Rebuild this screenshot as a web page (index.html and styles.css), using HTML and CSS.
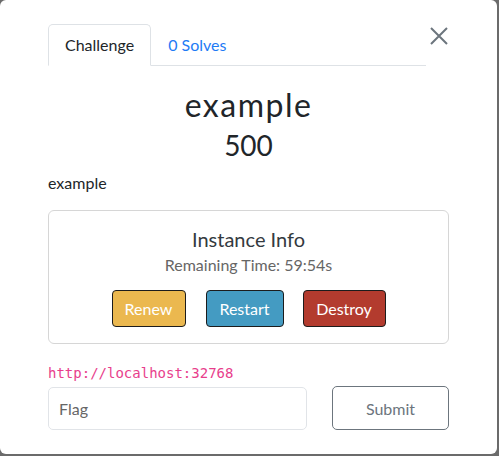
FILE: index.html
```html
<!DOCTYPE html>
<html lang="en">
<head>
  <meta charset="UTF-8">
  <meta name="viewport" content="width=device-width, initial-scale=1.0">
  <title>Challenge</title>
  <link rel="stylesheet" href="styles.css">
</head>
<body>
  <div class="modal">
    <div class="modal-head">
      <ul class="tabs">
        <li class="tab active">Challenge</li>
        <li class="tab link">0 Solves</li>
      </ul>
      <button class="close" aria-label="Close">
        <svg width="18" height="18" viewBox="0 0 18 18">
          <path d="M1 1 L17 17 M17 1 L1 17" stroke="#6c757d" stroke-width="2" fill="none"/>
        </svg>
      </button>
    </div>

    <h2 class="title">example</h2>
    <h3 class="value">500</h3>

    <p class="desc">example</p>

    <div class="instance">
      <h4>Instance Info</h4>
      <p class="time">Remaining Time: 59:54s</p>
      <div class="actions">
        <button class="btn renew">Renew</button>
        <button class="btn restart">Restart</button>
        <button class="btn destroy">Destroy</button>
      </div>
    </div>

    <code class="url">http://localhost:32768</code>

    <form class="flag-form">
      <input type="text" placeholder="Flag">
      <button type="submit">Submit</button>
    </form>
  </div>
</body>
</html>
```

FILE: styles.css
```css
body {
  margin: 0;
  padding: 0;
  background: #6b6b6b;
  font-family: Lato, "Open Sans", sans-serif;
  color: #212529;
}

.modal {
  width: 497px;
  height: 454px;
  box-sizing: border-box;
  background: #fff;
  border-radius: 6px;
  padding: 24px 48px 0 48px;
}

.modal-head {
  display: flex;
  align-items: flex-start;
}

.tabs {
  flex: 1;
  display: flex;
  list-style: none;
  margin: 0;
  padding: 0;
  border-bottom: 1px solid #dee2e6;
}

.tab {
  padding: 0 16px;
  height: 40px;
  line-height: 40px;
  font-size: 16px;
  margin-bottom: -1px;
  border: 1px solid transparent;
  border-radius: 5px 5px 0 0;
}

.tab.active {
  border-color: #dee2e6 #dee2e6 #fff;
  color: #212529;
}

.tab.link {
  color: #1e7bf5;
}

.close {
  width: 20px;
  margin: 3px 0 0 3px;
  padding: 0;
  border: none;
  background: none;
}

.title {
  margin: 20px 0 0;
  text-align: center;
  font-weight: 400;
  font-size: 32px;
  letter-spacing: 1.5px;
  line-height: 38px;
}

.value {
  margin: 4px 0 0;
  text-align: center;
  font-weight: 400;
  font-size: 28px;
  line-height: 34px;
}

.desc {
  margin: 11px 0 0;
  font-size: 16px;
  line-height: 20px;
}

.instance {
  margin-top: 17px;
  border: 1px solid #d6d6d6;
  border-radius: 6px;
  padding: 15px 0 16px;
  text-align: center;
}

.instance h4 {
  margin: 0;
  font-weight: 400;
  font-size: 20px;
  line-height: 26px;
  color: #343a40;
}

.time {
  margin: 3px 0 0;
  font-size: 16px;
  line-height: 20px;
  color: #666;
}

.actions {
  display: flex;
  justify-content: center;
  gap: 19px;
  margin-top: 15px;
}

.btn {
  font-family: Lato, sans-serif;
  font-size: 16px;
  height: 37px;
  padding: 0;
  border: 1px solid #1c1c1c;
  border-radius: 4px;
  color: #fff;
}

.renew { background: #ebb84f; width: 74px; }
.restart { background: #449bc2; width: 78px; margin-left: 1px; }
.destroy { background: #b33b2e; width: 83px; }

.url {
  display: block;
  margin-top: 21px;
  font-family: "DejaVu Sans Mono", "Liberation Mono", monospace;
  font-size: 14px;
  line-height: 16px;
  color: #e83e8c;
}

.flag-form {
  display: flex;
  justify-content: space-between;
  margin-top: 6px;
}

.flag-form input {
  width: 259px;
  height: 43px;
  box-sizing: border-box;
  border: 1px solid #e1e4e8;
  border-radius: 5px;
  padding: 0 10px;
  font-family: Lato, sans-serif;
  font-size: 16px;
}

.flag-form input::placeholder {
  color: #666;
}

.flag-form button {
  width: 117px;
  height: 44px;
  margin-top: -1px;
  background: #fff;
  border: 1px solid #6c757d;
  border-radius: 5px;
  color: #6c757d;
  font-family: Lato, sans-serif;
  font-size: 16px;
}
```
